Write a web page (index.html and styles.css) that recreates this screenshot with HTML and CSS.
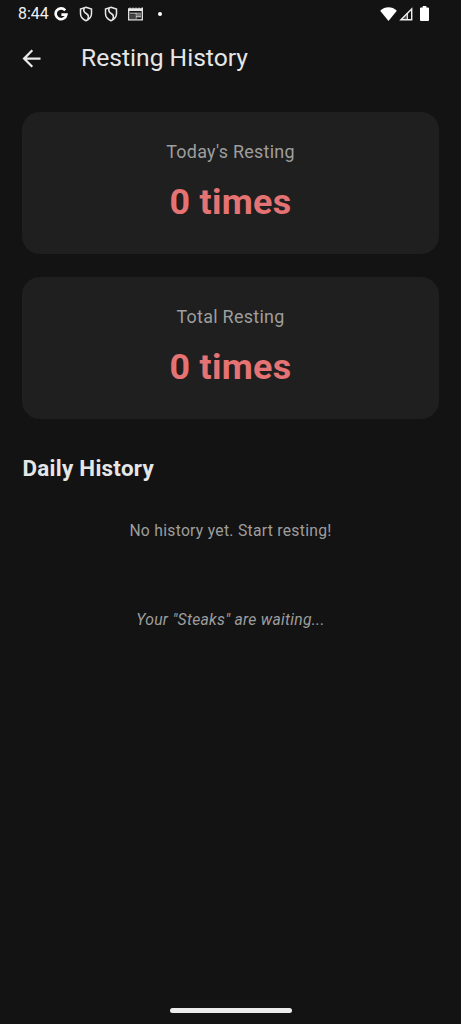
FILE: index.html
```html
<!DOCTYPE html>
<html lang="en">
<head>
<meta charset="utf-8">
<title>Resting History</title>
<link rel="stylesheet" href="styles.css">
</head>
<body>
<div class="screen">
  <div class="status-bar">
    <span class="clock">8:44</span>
    <svg class="google" viewBox="0 0 14 14"><path d="M11.2 3.3A5.4 5.4 0 1 0 12.4 7.6H7.4" fill="none" stroke="#fff" stroke-width="2.6"/></svg>
    <svg class="shield" viewBox="0 0 14 16"><path d="M7 1.2 12.5 3.1V7.5C12.5 11 10.2 13.4 7 14.8 3.8 13.4 1.5 11 1.5 7.5V3.1Z"/><path d="M5.2 2C4 5.2 5 6.3 7.2 7.5 9.8 9 10 11 8.6 13.6"/></svg>
    <svg class="shield" viewBox="0 0 14 16"><path d="M7 1.2 12.5 3.1V7.5C12.5 11 10.2 13.4 7 14.8 3.8 13.4 1.5 11 1.5 7.5V3.1Z"/><path d="M5.2 2C4 5.2 5 6.3 7.2 7.5 9.8 9 10 11 8.6 13.6"/></svg>
    <svg class="news" viewBox="0 0 15 14"><path d="M.7 3V12.8H14.3V3" fill="none" stroke="#e8e8e8" stroke-width="1.3"/><path d="M0 1.2H1.5V.4H2.5V1.2H4.5V.4H5.5V1.2H7.5V.4H8.5V1.2H10.5V.4H11.5V1.2H13.5V.4H15V4H0Z" fill="#e8e8e8"/><path d="M2 6.2H13" stroke="#c8c8c8"/><path d="M8.5 6.5H13V9.8H8.5Z" fill="#777"/><path d="M8 6V12M8 9.8H13" stroke="#d0d0d0"/><path d="M2 7.2H7.5V12H2Z" fill="#444"/></svg>
    <span class="dot"></span>
    <svg class="wifi" viewBox="0 0 17 14"><path d="M8.5 14 .2 3.7C5-.9 12-.9 16.8 3.7Z" fill="#fff"/></svg>
    <svg class="signal" viewBox="0 0 14 14"><path d="M12.7 1.9V12.7H1.9Z" fill="none" stroke="#f0f0f0" stroke-width="1.4"/><path d="M8.3 6V12.7" stroke="#f0f0f0" stroke-width="1.2"/><path d="M8.3 6V13H1.6Z" fill="#f0f0f0" opacity=".25"/></svg>
    <svg class="battery" viewBox="0 0 9 15"><path d="M2.7 0H6.3V1.5H8Q9 1.5 9 2.5V14Q9 15 8 15H1Q0 15 0 14V2.5Q0 1.5 1 1.5H2.7Z" fill="#fff"/></svg>
  </div>
  <header class="app-bar">
    <svg class="back" viewBox="0 0 24 24"><path d="M20 11H7.83l5.59-5.59L12 4l-8 8 8 8 1.41-1.41L7.83 13H20v-2z" fill="#eaeaea"/></svg>
    <h1 class="title">Resting History</h1>
  </header>
  <main class="content">
    <section class="card">
      <div class="label">Today's Resting</div>
      <div class="value">0 times</div>
    </section>
    <section class="card">
      <div class="label">Total Resting</div>
      <div class="value">0 times</div>
    </section>
    <h2 class="subtitle">Daily History</h2>
    <p class="empty">No history yet. Start resting!</p>
    <p class="waiting">Your "Steaks" are waiting...</p>
  </main>
  <div class="home-bar"></div>
</div>
</body>
</html>
```
FILE: styles.css
```css
* { box-sizing: border-box; margin: 0; padding: 0; }
body { background: #131313; color: #e6e6e6; font-family: Roboto, sans-serif; }
.screen { display: flex; flex-direction: column; width: 461px; height: 1024px; overflow: hidden; background: #131313; }
.status-bar { display: flex; align-items: center; height: 27px; padding-left: 18px; flex: none; }
.clock { width: 36px; font-size: 15.9px; line-height: 27px; color: #f0f0f0; white-space: nowrap; }
.google { width: 14px; height: 14px; }
.shield { width: 14px; height: 16px; margin-left: 11px; fill: none; stroke: #e8e8e8; stroke-width: 1.5; }
.news { width: 15px; height: 14px; margin-left: 10px; }
.dot { width: 4px; height: 4px; margin-left: 15px; border-radius: 50%; background: #fff; }
.wifi { width: 17px; height: 14px; margin-left: 218px; }
.signal { width: 14px; height: 14px; margin-left: 2px; }
.battery { width: 9px; height: 15px; margin-left: 7px; }
.app-bar { display: flex; align-items: center; height: 62px; padding-left: 18px; flex: none; }
.back { width: 27px; height: 27px; }
.title { margin-left: 36px; font-size: 24.65px; font-weight: 400; line-height: 32px; }
.content { display: flex; flex-direction: column; flex: 1; padding: 23.3px 22.4px 0; }
.card { height: 142px; margin-bottom: 22.5px; padding-top: 26.9px; border-radius: 18px; background: #1f1f1f; text-align: center; }
.label { font-size: 17.93px; line-height: 26px; letter-spacing: .28px; color: #9e9e9e; }
.value { margin-top: 13px; font-size: 35.86px; font-weight: 700; line-height: 48px; letter-spacing: .28px; color: #e57373; }
.subtitle { margin-top: 10.8px; font-size: 22.4px; font-weight: 700; line-height: 32px; letter-spacing: .28px; }
.empty { margin-top: 34.6px; font-size: 15.7px; line-height: 24px; letter-spacing: .28px; color: #9e9e9e; text-align: center; }
.waiting { margin-top: 65.6px; font-size: 15.7px; font-style: italic; line-height: 24px; letter-spacing: .28px; color: #9e9e9e; text-align: center; }
.home-bar { width: 122px; height: 5px; margin: 0 auto 11px; border-radius: 3px; background: #ececec; flex: none; }
```
